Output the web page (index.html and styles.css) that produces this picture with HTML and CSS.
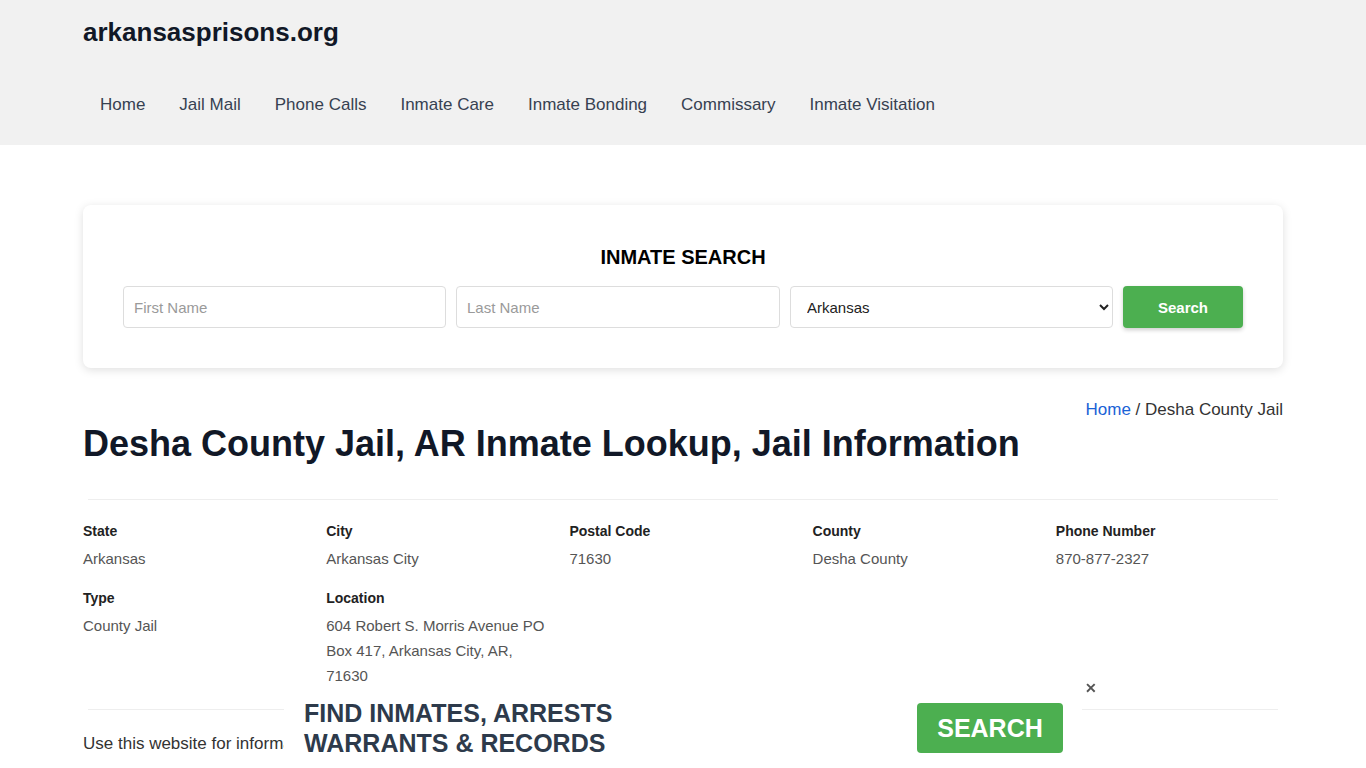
FILE: index.html
```html
<!DOCTYPE html>
<html lang="en">
<head>
<meta charset="utf-8">
<title>Desha County Jail, AR Inmate Lookup, Jail Information</title>
<link rel="stylesheet" href="styles.css">
</head>
<body>
<header class="site-header">
  <div class="container">
    <div class="logo">arkansasprisons.org</div>
    <nav class="main-nav">
      <a href="#">Home</a>
      <a href="#">Jail Mail</a>
      <a href="#">Phone Calls</a>
      <a href="#">Inmate Care</a>
      <a href="#">Inmate Bonding</a>
      <a href="#">Commissary</a>
      <a href="#">Inmate Visitation</a>
    </nav>
  </div>
</header>

<main class="container">
  <section class="search-card">
    <h2 class="search-title">INMATE SEARCH</h2>
    <form class="search-form">
      <input type="text" class="field" placeholder="First Name">
      <input type="text" class="field field-wide" placeholder="Last Name">
      <select class="field"><option>Arkansas</option></select>
      <button type="button" class="btn-search">Search</button>
    </form>
  </section>

  <div class="breadcrumb"><a href="#">Home</a> / Desha County Jail</div>
  <h1 class="page-title">Desha County Jail, AR Inmate Lookup, Jail Information</h1>

  <hr class="divider">

  <div class="info-grid">
    <div class="info-item"><div class="label">State</div><div class="value">Arkansas</div></div>
    <div class="info-item"><div class="label">City</div><div class="value">Arkansas City</div></div>
    <div class="info-item"><div class="label">Postal Code</div><div class="value">71630</div></div>
    <div class="info-item"><div class="label">County</div><div class="value">Desha County</div></div>
    <div class="info-item"><div class="label">Phone Number</div><div class="value">870-877-2327</div></div>
    <div class="info-item"><div class="label">Type</div><div class="value">County Jail</div></div>
    <div class="info-item"><div class="label">Location</div><div class="value">604 Robert S. Morris Avenue PO Box 417, Arkansas City, AR, 71630</div></div>
  </div>

  <hr class="divider">

  <p class="intro">Use this website for information about Desha County Jail, including inmate lookup, visitation, mail and phone calls.</p>
</main>

<div class="promo-banner">
  <div class="promo-text">FIND INMATES, ARRESTS<br>WARRANTS &amp; RECORDS</div>
  <button type="button" class="promo-btn">SEARCH</button>
  <span class="promo-close">&#x2715;</span>
</div>
</body>
</html>
```

FILE: styles.css
```css
* { box-sizing: border-box; }

html, body {
  margin: 0;
  padding: 0;
  background: #ffffff;
  font-family: "Liberation Sans", Arial, sans-serif;
  color: #333333;
  font-size: 17px;
}

.container {
  width: 1200px;
  margin: 0 auto;
}

.site-header {
  background: #f1f1f1;
  padding: 17px 0 16px;
}

.logo {
  font-size: 26px;
  font-weight: bold;
  line-height: 30px;
  color: #111827;
}

.main-nav {
  display: flex;
  margin-top: 34px;
}

.main-nav a {
  display: block;
  padding: 12px 17px;
  line-height: 24px;
  font-size: 17px;
  color: #374151;
  text-decoration: none;
}

.search-card {
  margin-top: 60px;
  background: #ffffff;
  border-radius: 8px;
  box-shadow: 0 2px 10px rgba(0, 0, 0, 0.13);
  padding: 40px 40px 40px;
}

.search-title {
  margin: 0 0 17px;
  text-align: center;
  font-size: 20px;
  line-height: 24px;
  font-weight: bold;
  color: #000000;
}

.search-form {
  display: flex;
  gap: 10px;
}

.field {
  flex: 0 0 323px;
  width: 323px;
  height: 42px;
  margin: 0;
  border: 1px solid #dddddd;
  border-radius: 4px;
  padding: 0 10px;
  font-family: "Liberation Sans", Arial, sans-serif;
  font-size: 15px;
  color: #222222;
  background: #ffffff;
}

.field-wide {
  flex-basis: 324px;
  width: 324px;
}

.field::placeholder {
  color: #9a9a9a;
}

select.field {
  padding-left: 12px;
}

.btn-search {
  flex: 0 0 120px;
  height: 42px;
  margin: 0;
  border: none;
  border-radius: 4px;
  background: #4caf50;
  color: #ffffff;
  font-family: "Liberation Sans", Arial, sans-serif;
  font-weight: bold;
  font-size: 15px;
  box-shadow: 0 2px 4px rgba(0, 0, 0, 0.2);
}

.breadcrumb {
  margin-top: 30px;
  text-align: right;
  line-height: 24px;
  font-size: 17px;
  color: #333333;
}

.breadcrumb a {
  color: #1a62d6;
  text-decoration: none;
}

.page-title {
  margin: 0;
  font-size: 36px;
  line-height: 43px;
  font-weight: bold;
  color: #111827;
}

.divider {
  border: none;
  border-top: 1px solid #eeeeee;
  margin: 34px 5px 0;
}

.info-grid {
  display: grid;
  grid-template-columns: repeat(5, 1fr);
  column-gap: 16px;
  row-gap: 17px;
  margin-top: 21px;
}

.label {
  font-size: 14px;
  font-weight: bold;
  line-height: 20px;
  color: #222222;
  margin-bottom: 5px;
}

.value {
  font-size: 15px;
  line-height: 25px;
  color: #555555;
}

.info-grid + .divider {
  margin-top: 21px;
}

.intro {
  margin: 21px 0 0;
  font-size: 17px;
  line-height: 25px;
  color: #333333;
}

.promo-banner {
  position: fixed;
  left: 284px;
  bottom: 0;
  width: 798px;
  height: 73px;
  background: #ffffff;
  display: flex;
  align-items: flex-start;
  justify-content: space-between;
  padding: 0 19px 0 20px;
}

.promo-text {
  font-size: 25px;
  line-height: 30px;
  font-weight: bold;
  color: #2d3a4b;
  margin-top: 3px;
}

.promo-btn {
  width: 146px;
  height: 50px;
  border: none;
  border-radius: 4px;
  background: #4caf50;
  color: #ffffff;
  font-family: "Liberation Sans", Arial, sans-serif;
  font-size: 25px;
  font-weight: bold;
  margin-top: 8px;
}

.promo-close {
  position: absolute;
  top: -14px;
  right: -15px;
  font-size: 14px;
  line-height: 14px;
  color: #555555;
  font-weight: bold;
}
```
